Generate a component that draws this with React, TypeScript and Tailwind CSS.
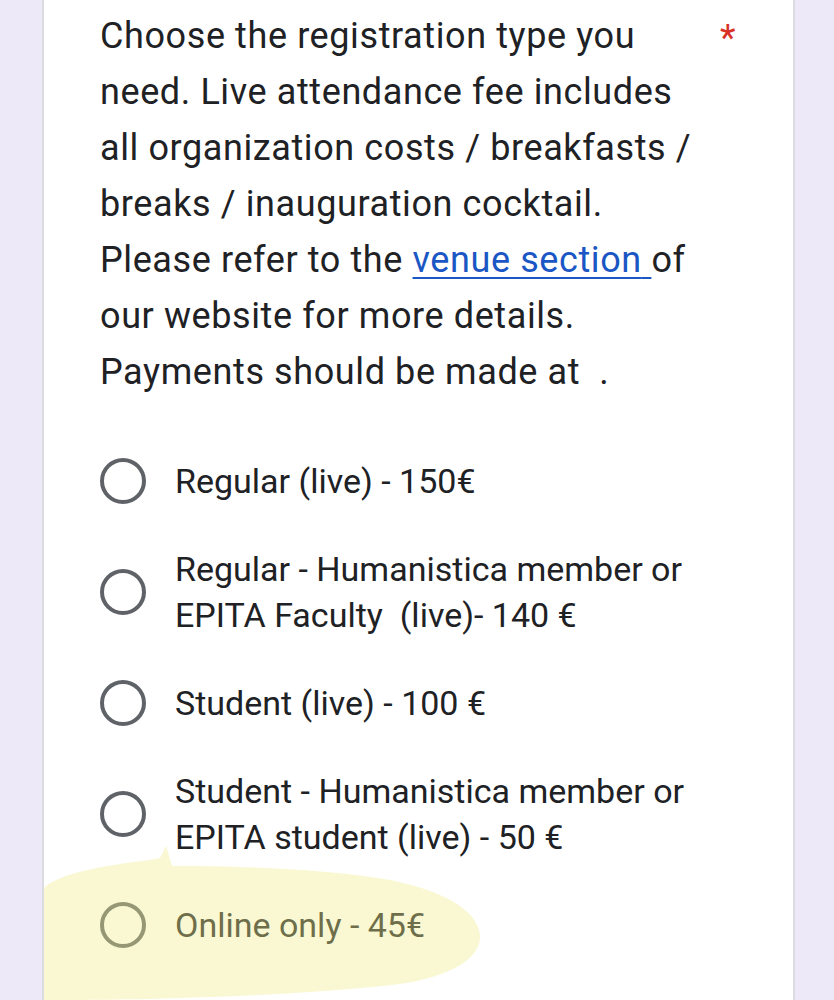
const options = [
  { label: "Regular (live) - 150€" },
  { label: "Regular - Humanistica member or", second: "EPITA Faculty\u00a0\u00a0(live)- 140 €" },
  { label: "Student (live) - 100 €" },
  { label: "Student - Humanistica member or", second: "EPITA student (live) - 50 €" },
  { label: "Online only - 45€" },
];

function Radio() {
  return <div className="h-[46px] w-[46px] shrink-0 rounded-full border-[4px] border-[#5f6368]" />;
}

export default function App() {
  return (
    <div className="min-h-screen bg-[#ede9f8] pl-[42px]" style={{ fontFamily: "Roboto, 'Noto Sans', sans-serif" }}>
      <div className="relative h-[1000px] w-[753px] overflow-hidden border-x-2 border-[#dadce0] bg-white">
        {/* Question title */}
        <div className="flex pl-[56px] pt-[8px]">
          <p className="w-[600px] text-[36px] leading-[56px] tracking-[0.6px] text-[#202124]">
            Choose the registration type you need. Live attendance fee includes all organization costs / breakfasts / breaks / inauguration cocktail.
            <br />
            Please refer to the{" "}
            <a href="#" className="text-[#1a56c4] underline decoration-2 underline-offset-[5px]">
              venue section{" "}
            </a>
            of our website for more details.
            <br />
            Payments should be made at&nbsp;&nbsp;.
          </p>
          <span className="ml-[20px] mt-[2px] text-[36px] leading-[56px] text-[#d93025]">*</span>
        </div>

        {/* Options */}
        <div className="mt-[58px] flex flex-col gap-[42px] pl-[56px]">
          {options.map((o) => (
            <div key={o.label} className="flex items-center gap-[29px]">
              <Radio />
              <div className="text-[34px] leading-[46px] text-[#202124]">
                <div>{o.label}</div>
                {o.second && <div className="whitespace-pre">{o.second}</div>}
              </div>
            </div>
          ))}
        </div>

        {/* Highlighter mark over the last option */}
        <svg
          className="pointer-events-none absolute left-[-44px] top-0"
          width="834"
          height="1000"
          viewBox="0 0 834 1000"
        >
          <path
            d="M44 1000 L44 888 C54 878 80 870 120 864 C140 861 152 860 160 858 L166 846 L172 866 C230 866 320 868 390 880 C440 890 476 908 480 934 C482 958 452 976 400 984 C330 992 250 996 180 998 C120 1000 70 1000 44 1000 Z"
            fill="#efec88"
            opacity="0.38"
          />
        </svg>
      </div>
    </div>
  );
}
